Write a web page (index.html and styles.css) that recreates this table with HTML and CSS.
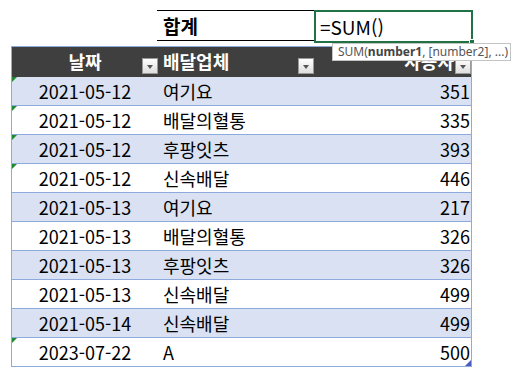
FILE: index.html
```html
<!DOCTYPE html>
<html lang="ko">
<head>
<meta charset="utf-8">
<link rel="stylesheet" href="styles.css">
</head>
<body>
<div class="sheet">
  <div class="top">
    <div class="sum-label">합계</div>
    <div class="formula">=SUM()<span class="handle"></span></div>
  </div>
  <div class="tbl">
    <div class="row hdr">
      <div class="c c1">날짜<span class="fbtn"></span></div>
      <div class="c c2">배달업체<span class="fbtn"></span></div>
      <div class="c c3">사용자<span class="fbtn"></span></div>
    </div>
    <div class="row band"><div class="c c1"><span class="err"></span>2021-05-12</div><div class="c c2">여기요</div><div class="c c3">351</div></div>
    <div class="row"><div class="c c1"><span class="err"></span>2021-05-12</div><div class="c c2">배달의혈통</div><div class="c c3">335</div></div>
    <div class="row band"><div class="c c1"><span class="err"></span>2021-05-12</div><div class="c c2">후팡잇츠</div><div class="c c3">393</div></div>
    <div class="row"><div class="c c1"><span class="err"></span>2021-05-12</div><div class="c c2">신속배달</div><div class="c c3">446</div></div>
    <div class="row band"><div class="c c1">2021-05-13</div><div class="c c2">여기요</div><div class="c c3">217</div></div>
    <div class="row"><div class="c c1">2021-05-13</div><div class="c c2">배달의혈통</div><div class="c c3">326</div></div>
    <div class="row band"><div class="c c1">2021-05-13</div><div class="c c2">후팡잇츠</div><div class="c c3">326</div></div>
    <div class="row"><div class="c c1">2021-05-13</div><div class="c c2">신속배달</div><div class="c c3">499</div></div>
    <div class="row band"><div class="c c1">2021-05-14</div><div class="c c2">신속배달</div><div class="c c3">499</div></div>
    <div class="row last"><div class="c c1"><span class="err"></span>2023-07-22</div><div class="c c2">A</div><div class="c c3">500<span class="resize"></span></div></div>
  </div>
  <div class="tip">SUM(<b>number1</b>, [number2], ...)</div>
</div>
</body>
</html>
```

FILE: styles.css
```css
* { box-sizing: border-box; }
html, body {
  margin: 0;
  padding: 0;
  background: #ffffff;
}
body {
  width: 515px;
  height: 377px;
  overflow: hidden;
  font-family: "Noto Sans CJK KR", "Noto Sans", sans-serif;
  color: #000;
}
.sheet {
  position: relative;
  padding-top: 10px;
}
.top {
  display: flex;
  margin-left: 157px;
  height: 33px;
}
.sum-label {
  width: 157px;
  height: 31px;
  border-top: 1px solid #000;
  border-bottom: 1px solid #000;
  padding-left: 6px;
  font-weight: 700;
  font-size: 19px;
  line-height: 29px;
}
.formula {
  position: relative;
  width: 159px;
  height: 33px;
  border: 2px solid #217346;
  padding-left: 4px;
  font-size: 19px;
  line-height: 30px;
}
.handle {
  position: absolute;
  right: -4px;
  bottom: -4px;
  width: 6px;
  height: 6px;
  background: #217346;
  border: 1px solid #fff;
}
.tbl {
  margin-left: 11px;
  margin-top: 3px;
  width: 461px;
  border: 1px solid #8ea9db;
  border-top-color: #8ea9db;
}
.row {
  display: grid;
  grid-template-columns: 146px 156px 157px;
  height: 29px;
  border-bottom: 1px solid #8ea9db;
  font-size: 18px;
  line-height: 28px;
}
.row.last { border-bottom: none; height: 28px; }
.row.band { background: #d9e1f2; }
.row.hdr {
  height: 30px;
  background: #3f3f3f;
  color: #fff;
  font-weight: 700;
  border-bottom: none;
  line-height: 29px;
}
.c {
  position: relative;
  white-space: nowrap;
  overflow: visible;
}
.c1 { text-align: center; }
.c2 { padding-left: 5px; }
.c3 { text-align: right; padding-right: 1px; }
.hdr .c3 { padding-right: 17px; }
.fbtn {
  position: absolute;
  right: 0;
  bottom: 3px;
  width: 16px;
  height: 16px;
  border: 1px solid #9a9a9a;
  background: linear-gradient(#ffffff, #dedede);
}
.hdr .c1 .fbtn { right: 0; }
.fbtn::after {
  content: "";
  position: absolute;
  left: 4px;
  top: 6px;
  border-left: 3.5px solid transparent;
  border-right: 3.5px solid transparent;
  border-top: 4px solid #555;
}
.err {
  position: absolute;
  left: 0;
  top: 0;
  width: 5px;
  height: 5px;
  background: #1f8a2e;
  clip-path: polygon(0 0, 100% 0, 0 100%);
}
.resize {
  position: absolute;
  right: 0;
  bottom: 0;
  width: 6px;
  height: 6px;
  background: #4a5bc4;
  clip-path: polygon(100% 0, 100% 100%, 0 100%);
}
.tip {
  position: absolute;
  left: 332px;
  top: 43px;
  width: 179px;
  height: 18px;
  background: #fff;
  border: 1px solid #c4c4c4;
  color: #555;
  font-family: "Noto Sans", "Open Sans", sans-serif;
  font-size: 12px;
  line-height: 16px;
  padding-left: 5px;
  white-space: nowrap;
}
.tip b { font-weight: 700; color: #444; }
```
